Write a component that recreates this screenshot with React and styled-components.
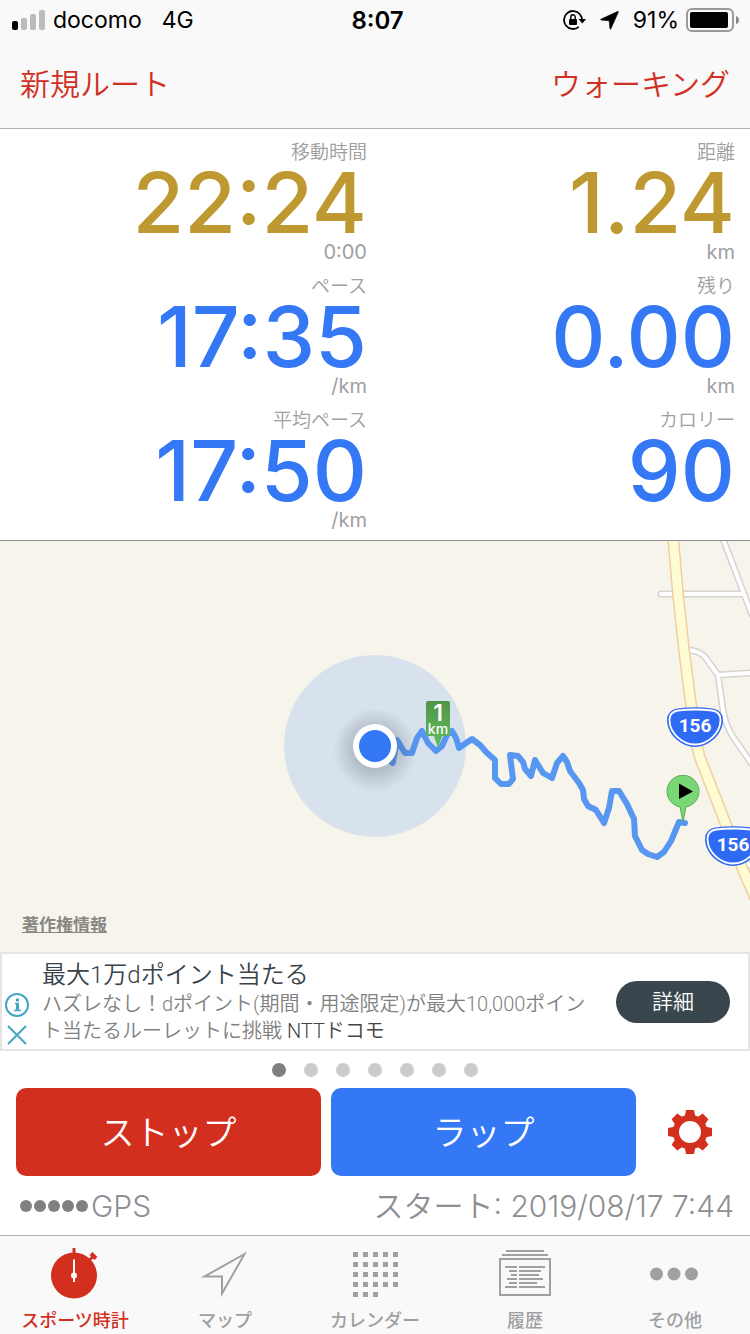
import React from "react";
import styled, { createGlobalStyle } from "styled-components";

const GlobalStyle = createGlobalStyle`
  * {
    box-sizing: border-box;
  }

  body {
    margin: 0;
    background: #ffffff;
    font-family: Inter, "Noto Sans CJK JP", sans-serif;
  }

  button {
    margin: 0;
    padding: 0;
    border: 0;
    background: none;
    font-family: inherit;
    cursor: pointer;
  }

  a {
    color: inherit;
    text-decoration: none;
  }
`;

const metrics = [
  { label: "移動時間", value: "22:24", unit: "0:00", color: "#be9830" },
  { label: "距離", value: "1.24", unit: "km", color: "#be9830" },
  { label: "ペース", value: "17:35", unit: "/km", color: "#3478f6" },
  { label: "残り", value: "0.00", unit: "km", color: "#3478f6" },
  { label: "平均ペース", value: "17:50", unit: "/km", color: "#3478f6" },
  { label: "カロリー", value: "90", unit: "", color: "#3478f6" },
];

const tabs = [
  { label: "スポーツ時計", icon: StopwatchIcon, active: true },
  { label: "マップ", icon: ArrowIcon },
  { label: "カレンダー", icon: CalendarIcon },
  { label: "履歴", icon: HistoryIcon },
  { label: "その他", icon: MoreIcon },
];

const pages = [1, 2, 3, 4, 5, 6, 7];

export default function App() {
  return (
    <Screen>
      <GlobalStyle />
      <Header>
        <StatusBar />
        <NavBar>
          <NavButton>新規ルート</NavButton>
          <NavButton>ウォーキング</NavButton>
        </NavBar>
      </Header>
      <Metrics>
        {metrics.map((item) => (
          <Metric key={item.label}>
            <MetricLabel>{item.label}</MetricLabel>
            <MetricValue $color={item.color}>{item.value}</MetricValue>
            <MetricUnit>{item.unit}</MetricUnit>
          </Metric>
        ))}
      </Metrics>
      <MapPanel>
        <RouteMap />
        <Copyright href="#copyright">著作権情報</Copyright>
      </MapPanel>
      <AdBanner />
      <Pager>
        {pages.map((page) => (
          <PageDot key={page} $active={page === 1} aria-label={`${page}`} />
        ))}
      </Pager>
      <Controls>
        <ActionButton $color="#d32f1f">ストップ</ActionButton>
        <ActionButton $color="#3478f6">ラップ</ActionButton>
        <SettingsButton aria-label="設定">
          <GearIcon />
        </SettingsButton>
      </Controls>
      <InfoRow>
        <Gps>
          <GpsDots>
            {[1, 2, 3, 4, 5].map((n) => (
              <GpsDot key={n} />
            ))}
          </GpsDots>
          GPS
        </Gps>
        <span>スタート: 2019/08/17 7:44</span>
      </InfoRow>
      <TabBar>
        {tabs.map(({ label, icon: Icon, active }) => (
          <Tab key={label} href="#tab" $active={active}>
            <Icon />
            <TabLabel>{label}</TabLabel>
          </Tab>
        ))}
      </TabBar>
    </Screen>
  );
}

function StatusBar() {
  return (
    <Status>
      <StatusLeft>
        <svg width="33" height="20" viewBox="0 0 33 20">
          <rect x="0" y="11" width="6" height="9" rx="2" fill="#000" />
          <rect x="9" y="8" width="6" height="12" rx="2" fill="#bbb" />
          <rect x="18" y="4" width="6" height="16" rx="2" fill="#bbb" />
          <rect x="27" y="0" width="6" height="20" rx="2" fill="#bbb" />
        </svg>
        <Carrier>docomo</Carrier>
        <span>4G</span>
      </StatusLeft>
      <Clock>8:07</Clock>
      <StatusRight>
        <svg width="23" height="22" viewBox="0 0 23 22">
          <circle
            cx="10"
            cy="11"
            r="9"
            fill="none"
            stroke="#000"
            strokeWidth="1.8"
            strokeDasharray="48 8.500"
            transform="rotate(50 10 11)"
          />
          <path d="M15.500 10h7.500l-3.700 4.500z" fill="#000" />
          <rect x="6" y="10" width="8" height="6" rx="1" fill="#000" />
          <path
            d="M7.800 10.500V8a2.2 2.2 0 0 1 4.4 0V10.500"
            fill="none"
            stroke="#000"
            strokeWidth="1.4"
          />
        </svg>
        <svg width="19" height="19" viewBox="0 0 19 19">
          <path
            d="M17.4 0.6Q18.8 0 18.2 1.5L11 17.6Q10.3 19 9.9 17.4L9.2 9.8 1.4 9.1Q-0.2 8.7 1.2 8z"
            fill="#000"
            stroke="#000"
            strokeWidth="0.6"
          />
        </svg>
        <Percent>91%</Percent>
        <svg width="54" height="24" viewBox="0 0 54 24">
          <rect
            x="2"
            y="1"
            width="46"
            height="22"
            rx="5"
            fill="none"
            stroke="#999"
            strokeWidth="2"
          />
          <rect x="5" y="4" width="38" height="16" rx="2" fill="#000" />
          <path d="M51 8q3 1 3 4T51 16z" fill="#888" />
        </svg>
      </StatusRight>
    </Status>
  );
}

function Shield({ x, y }) {
  return (
    <g transform={`translate(${x} ${y})`}>
      <path
        d="M-18-18.500Q0-21 18-18.500Q28-16.500 28-7C28 8 13 20 0 20S-28 8-28-7Q-28-16.500-18-18.500Z"
        fill="#2f6af5"
      />
      <path
        d="M-17-16.500Q0-18.500 17-16.500Q25.500-15 25.500-7C25.500 6.500 12 17.500 0 17.500S-25.500 6.500-25.500-7Q-25.500-15-17-16.500Z"
        fill="#2f6af5"
        stroke="#fff"
        strokeWidth="1.800"
      />
      <ShieldText x="0" y="5">
        156
      </ShieldText>
    </g>
  );
}

function RouteMap() {
  const sideRoads =
    "M661 594H744M722 536L744 594 752 615M686 650Q698 650 705 657L718 675 752 673M718 675L723 710Q725 724 733 737L752 764M738 858L754 868";
  const mainRoad =
    "M673 536L678 594 684 650 692 712 697 746Q699 757 704 768L727 827 743 870 758 904";
  return (
    <MapSvg
      viewBox="0 541 750 411"
      preserveAspectRatio="xMidYMid slice"
      role="img"
      aria-label="マップ"
    >
      <defs>
        <linearGradient id="kmSign" x1="0" y1="0" x2="0" y2="1">
          <stop offset="0" stopColor="#4f9549" />
          <stop offset="1" stopColor="#62bd5c" />
        </linearGradient>
        <radialGradient id="dotShadow">
          <stop offset="0.5" stopColor="#3a4a5a" stopOpacity="0.24" />
          <stop offset="1" stopColor="#3a4a5a" stopOpacity="0" />
        </radialGradient>
      </defs>
      <g fill="none" strokeLinecap="round" strokeLinejoin="round">
        <path d={sideRoads} stroke="#d6d2cf" strokeWidth="7" />
        <path d={sideRoads} stroke="#fff" strokeWidth="4" />
        <path d={mainRoad} stroke="#eed0a0" strokeWidth="12" />
        <path d={mainRoad} stroke="#fffbd2" strokeWidth="9" />
      </g>
      <Shield x={695} y={727} />
      <Shield x={733} y={846} />
      <circle cx="375" cy="746" r="91" fill="#d8e2ec" />
      <path
        d="M375 746L392.700 763 397 740 405 753 412 753 417 738 422 731 428 743 436 751 442 746 447 735 452 731 456 738 459 748 472 739 480 745 487 753 495 760 495 778 501 784 509 784 513 779 510 755 518 756 523 762 525 769 531 776 535 760 543 773 552 778 557 763 563 756 567 762 570 771 579 783 583 790 584 799 588 806 596 810 604 823 609 808 612 791 619 791 627 804 634 819 635 836 642 850 648 854 657 857 664 852 671 841 679 822 685 823"
        fill="none"
        stroke="#5797f1"
        strokeWidth="6"
        strokeLinecap="round"
        strokeLinejoin="round"
      />
      <path
        d="M428 701H448Q450 701 450 703V734Q450 736 448 736H442L438 748 434 736H428Q426 736 426 734V703Q426 701 428 701Z"
        fill="url(#kmSign)"
      />
      <SignNumber x="438" y="721">
        1
      </SignNumber>
      <SignUnit x="438" y="734">
        km
      </SignUnit>
      <circle cx="375" cy="750" r="42" fill="url(#dotShadow)" />
      <circle cx="375" cy="746" r="22" fill="#fff" />
      <circle cx="375" cy="746" r="16" fill="#3478f6" />
      <path
        d="M680 807L683 822 686 807A16 16 0 1 0 680 807Z"
        fill="#78d875"
        stroke="#5fa85b"
        strokeWidth="1"
      />
      <path d="M679 783.500L693 791.500 679 799Z" fill="#000" />
    </MapSvg>
  );
}

function AdBanner() {
  return (
    <Ad>
      <AdMarks>
        <button aria-label="広告情報">
          <AdIcon viewBox="0 0 26 26">
            <circle cx="13" cy="13" r="11" />
            <path d="M11 11.500h3M10 18.500h7" strokeWidth="1.500" />
            <path d="M13.500 11V19M13.500 6.500V9.500" strokeWidth="3" />
          </AdIcon>
        </button>
        <button aria-label="閉じる">
          <AdIcon viewBox="0 0 26 26">
            <path d="M4 4l18 18M22 4L4 22" />
          </AdIcon>
        </button>
      </AdMarks>
      <AdText>
        <AdTitle>最大1万dポイント当たる</AdTitle>
        <AdBody>
          ハズレなし！dポイント(期間・用途限定)が最大10,000ポイント当たるルーレットに挑戦{" "}
          <Sponsor>NTTドコモ</Sponsor>
        </AdBody>
      </AdText>
      <AdButton href="#detail">詳細</AdButton>
    </Ad>
  );
}

function GearIcon() {
  return (
    <svg width="46" height="46" viewBox="-23 -23 46 46">
      <circle r="14" fill="none" stroke="#d32f1f" strokeWidth="6" />
      {[0, 45, 90, 135, 180, 225, 270, 315].map((angle) => (
        <path
          key={angle}
          d="M-4-22H4L5-17Q6-15.500 8-14L-8-14Q-6-15.500-5-17Z"
          transform={`rotate(${angle})`}
          fill="#d32f1f"
        />
      ))}
    </svg>
  );
}

function StopwatchIcon() {
  return (
    <TabIcon viewBox="0 0 56 56">
      <circle cx="27" cy="29.500" r="23" fill="currentColor" />
      <path
        d="M27 2V8M42 14.500L46 10.500"
        stroke="currentColor"
        strokeWidth="3"
      />
      <path d="M44 7.500L49 12.500" stroke="currentColor" strokeWidth="4" />
      <path d="M27 13.500V36" stroke="#f9f9f9" strokeWidth="2" />
      <circle cx="27" cy="29.500" r="3" fill="#f9f9f9" />
    </TabIcon>
  );
}

function ArrowIcon() {
  return (
    <TabIcon viewBox="0 0 56 56">
      <path
        d="M47.500 8L7.500 30.500H25V47.500Z"
        fill="none"
        stroke="currentColor"
        strokeWidth="2"
        strokeMiterlimit="10"
      />
    </TabIcon>
  );
}

function CalendarIcon() {
  const squares = [];
  for (let i = 0; i < 23; i++) {
    squares.push(
      <rect
        key={i}
        x={6 + (i % 5) * 10}
        y={6 + Math.floor(i / 5) * 10}
        width="5"
        height="5"
        fill="currentColor"
      />
    );
  }
  return <TabIcon viewBox="0 0 56 56">{squares}</TabIcon>;
}

function HistoryIcon() {
  return (
    <TabIcon viewBox="0 0 56 56">
      <g fill="none" stroke="currentColor" strokeWidth="2">
        <path d="M9 5H47M5 9H51" />
        <rect x="3" y="13" width="50" height="36" />
        <path d="M8 21H20M12 25H20M14 29H20M10 33H20M12 37H20M8 41H20" />
        <path d="M22 21H48M22 25H44M22 29H42M22 33H46M22 37H40M22 41H48" />
      </g>
    </TabIcon>
  );
}

function MoreIcon() {
  return (
    <TabIcon viewBox="0 0 56 56">
      <g fill="currentColor">
        <circle cx="9.500" cy="28" r="6.500" />
        <circle cx="27" cy="28" r="6.500" />
        <circle cx="44.500" cy="28" r="6.500" />
      </g>
    </TabIcon>
  );
}

const Screen = styled.main`
  display: flex;
  flex-direction: column;
  min-height: 100vh;
`;

const Header = styled.header`
  background: #f9f9f9;
  border-bottom: 1px solid #b2b2b2;
`;

const Status = styled.div`
  display: grid;
  grid-template-columns: 1fr auto 1fr;
  align-items: center;
  height: 40px;
  padding: 0 11px 0 12px;
  font-size: 23px;
  color: #000000;
`;

const StatusLeft = styled.div`
  display: flex;
  align-items: center;
`;

const StatusRight = styled.div`
  display: flex;
  align-items: center;
  justify-content: flex-end;
  gap: 14px;
`;

const Carrier = styled.span`
  margin: 0 20px 0 8px;
`;

const Clock = styled.span`
  padding-left: 4px;
  font-size: 24px;
  font-weight: 600;
`;

const Percent = styled.span`
  margin-right: -8px;
`;

const NavBar = styled.nav`
  display: flex;
  justify-content: space-between;
  align-items: center;
  height: 88px;
  padding: 0 20px;
`;

const NavButton = styled.button`
  color: #d03024;
  font-size: 30px;
  font-weight: 350;
  line-height: 44px;
`;

const Metrics = styled.section`
  display: grid;
  grid-template-columns: 1fr 1fr;
  row-gap: 6px;
  padding: 9px 0 6px;
  border-bottom: 1px solid #8e8e93;
`;

const Metric = styled.div`
  display: grid;
  grid-template-rows: 30px 70px 28px;
  align-items: center;
  justify-items: end;
  padding-right: 8px;

  &:nth-child(even) {
    padding-right: 15px;
  }
`;

const MetricLabel = styled.span`
  color: #a0a0a0;
  font-size: 19px;
  font-weight: 350;
  line-height: 28px;
`;

const MetricValue = styled.span`
  color: ${(props) => props.$color};
  font-size: 84px;
  font-weight: 500;
  line-height: 70px;
`;

const MetricUnit = styled.span`
  color: #a0a0a0;
  font-size: 20px;
  line-height: 28px;
`;

const MapPanel = styled.section`
  position: relative;
  flex: 1 1 411px;
  min-height: 411px;
  overflow: hidden;
  background: #f7f4ec;
`;

const MapSvg = styled.svg`
  position: absolute;
  inset: 0;
  width: 100%;
  height: 100%;
`;

const ShieldText = styled.text`
  fill: #ffffff;
  font-family: Roboto, sans-serif;
  font-size: 19px;
  font-weight: 700;
  text-anchor: middle;
`;

const SignNumber = styled.text`
  fill: #ffffff;
  font-size: 23px;
  font-weight: 600;
  text-anchor: middle;
`;

const SignUnit = styled.text`
  fill: #ffffff;
  font-size: 14px;
  font-weight: 500;
  text-anchor: middle;
`;

const Copyright = styled.a`
  position: absolute;
  left: 22px;
  bottom: 15px;
  color: #8a8782;
  font-size: 17px;
  font-weight: 700;
  line-height: 24px;
  text-decoration: underline;
`;

const Ad = styled.aside`
  display: flex;
  align-items: center;
  height: 99px;
  padding-right: 18px;
  border: 2px solid #e5e5e5;
  font-family: Roboto, "Noto Sans CJK JP", sans-serif;
`;

const AdMarks = styled.div`
  display: flex;
  flex-direction: column;
  align-self: flex-end;
  gap: 4px;
  width: 40px;
  padding: 0 0 1px 2px;

  button {
    width: 26px;
    height: 26px;
  }
`;

const AdIcon = styled.svg`
  display: block;
  width: 26px;
  height: 26px;
  fill: none;
  stroke: #45a5c4;
  stroke-width: 2;
`;

const AdText = styled.div`
  flex: 1;
  padding-right: 20px;
`;

const AdTitle = styled.h2`
  margin: 0;
  color: #37424b;
  font-size: 24px;
  font-weight: 350;
  line-height: 32px;
`;

const AdBody = styled.p`
  margin: 0;
  color: #808080;
  font-size: 20px;
  font-weight: 350;
  line-height: 27px;
`;

const Sponsor = styled.span`
  color: #444444;
`;

const AdButton = styled.a`
  width: 114px;
  border-radius: 21px;
  background: #39464d;
  color: #ffffff;
  font-size: 21px;
  font-weight: 350;
  line-height: 42px;
  text-align: center;
`;

const Pager = styled.div`
  display: flex;
  justify-content: center;
  align-items: center;
  gap: 18px;
  height: 37px;
`;

const PageDot = styled.button`
  width: 14px;
  height: 14px;
  border-radius: 50%;
  background: ${(props) => (props.$active ? "#808080" : "#cccccc")};
`;

const Controls = styled.div`
  display: flex;
  gap: 10px;
  padding-left: 16px;
`;

const ActionButton = styled.button`
  flex: 1;
  height: 88px;
  padding-bottom: 4px;
  border-radius: 10px;
  background: ${(props) => props.$color};
  color: #ffffff;
  font-size: 34px;
  font-weight: 350;
`;

const SettingsButton = styled.button`
  display: flex;
  align-items: center;
  justify-content: center;
  width: 104px;
  padding-right: 16px;
`;

const InfoRow = styled.div`
  display: flex;
  justify-content: space-between;
  align-items: center;
  height: 59px;
  padding: 0 16px 0 20px;
  color: #8e8e93;
  font-size: 30px;
  font-weight: 350;
  line-height: 40px;
`;

const Gps = styled.div`
  display: flex;
  align-items: center;
  gap: 3px;
`;

const GpsDots = styled.div`
  display: flex;
  gap: 2px;
`;

const GpsDot = styled.span`
  width: 12px;
  height: 12px;
  border-radius: 50%;
  background: #808080;
`;

const TabBar = styled.nav`
  display: grid;
  grid-template-columns: repeat(5, 1fr);
  height: 99px;
  border-top: 1px solid #b2b2b2;
  background: #f9f9f9;
`;

const Tab = styled.a`
  display: flex;
  flex-direction: column;
  align-items: center;
  gap: 7px;
  padding-top: 10px;
  color: ${(props) => (props.$active ? "#d32f1f" : "#a0a0a0")};
`;

const TabIcon = styled.svg`
  width: 56px;
  height: 56px;
`;

const TabLabel = styled.span`
  font-size: 18px;
  font-weight: 500;
  line-height: 24px;
`;
